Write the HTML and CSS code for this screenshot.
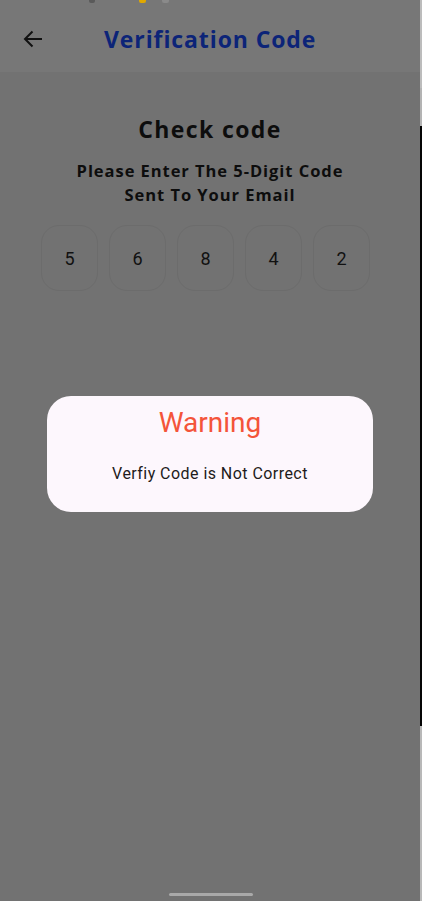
FILE: index.html
```html
<!DOCTYPE html>
<html lang="en">
<head>
<meta charset="utf-8">
<title>Verification Code</title>
<link rel="stylesheet" href="styles.css">
</head>
<body>
<div class="screen">
  <div class="main">
    <header class="appbar">
      <div class="status">
        <span class="st st-a"></span>
        <span class="st st-b"></span>
        <span class="st st-c"></span>
      </div>
      <button class="back" aria-label="Back">
        <svg width="20" height="18" viewBox="0 0 20 18"><path d="M19 9H2M9.5 1.5L2 9l7.5 7.5" fill="none" stroke="#111" stroke-width="2"/></svg>
      </button>
      <h1 class="title">Verification Code</h1>
    </header>
    <section class="content">
      <h2 class="heading">Check code</h2>
      <p class="sub">Please Enter The 5-Digit Code<br>Sent To Your Email</p>
      <div class="otp">
        <div class="box">5</div>
        <div class="box">6</div>
        <div class="box">8</div>
        <div class="box">4</div>
        <div class="box">2</div>
      </div>
    </section>
    <div class="home"></div>
  </div>
  <div class="edge">
    <div class="edge-top"></div>
    <div class="edge-dark"></div>
    <div class="edge-bottom"></div>
  </div>
  <div class="dialog">
    <div class="d-title">Warning</div>
    <div class="d-msg">Verfiy Code is Not Correct</div>
  </div>
</div>
</body>
</html>
```
FILE: styles.css
```css
* { box-sizing: border-box; }
html, body { margin: 0; padding: 0; }
body { background: #727272; width: 422px; height: 901px; overflow: hidden; }
.screen {
  position: relative;
  display: grid;
  grid-template-columns: 420px 2px;
  height: 901px;
}
.main {
  display: flex;
  flex-direction: column;
  height: 901px;
  background: #727272;
}
.appbar {
  position: relative;
  height: 72px;
  background: #777777;
  display: flex;
  align-items: center;
  padding: 6px 0 0 23px;
}
.status { position: absolute; top: 0; left: 0; right: 0; height: 4px; }
.st { position: absolute; top: 0; height: 3px; border-radius: 0 0 2px 2px; }
.st-a { left: 89px; width: 6px; background: #5a5a5a; }
.st-b { left: 139px; width: 7px; background: #e0a800; }
.st-c { left: 162px; width: 7px; background: #8a8a8a; }
.back {
  border: 0; background: none; padding: 0; margin: 0 0 0 0;
  width: 20px; height: 18px; display: flex;
}
.title {
  margin: 0 0 0 61px;
  font-family: "Open Sans", sans-serif;
  font-weight: 700;
  font-size: 23px;
  letter-spacing: 0.9px;
  color: #0c2478;
}
.content {
  flex: 1;
  display: flex;
  flex-direction: column;
  align-items: center;
  padding-top: 42px;
}
.heading {
  margin: 0;
  font-family: "Open Sans", sans-serif;
  font-weight: 700;
  font-size: 23px;
  line-height: 30px;
  letter-spacing: 1.4px;
  color: #0d0d0d;
}
.sub {
  margin: 15px 0 0;
  text-align: center;
  font-family: "Open Sans", sans-serif;
  font-weight: 700;
  font-size: 16.5px;
  line-height: 24px;
  letter-spacing: 0.95px;
  color: #0d0d0d;
}
.otp {
  margin: 18px 9px 0 0;
  display: flex;
  gap: 11px;
}
.box {
  width: 57px;
  height: 66px;
  border: 1px solid #6c6c6c;
  border-radius: 18px;
  display: flex;
  align-items: center;
  justify-content: center;
  font-family: Roboto, sans-serif;
  font-size: 18px;
  color: #111111;
}
.home {
  align-self: center;
  width: 84px;
  height: 3px;
  border-radius: 2px;
  background: #a9a9a9;
  margin: 0 0 5px 2px;
}
.edge { display: flex; flex-direction: column; }
.edge-top { height: 126px; background: #b3b3b3; box-shadow: inset 0 88px 0 #bcbcbc; }
.edge-dark { height: 600px; background: #050505; }
.edge-bottom { flex: 1; background: #b8b8b8; }
.dialog {
  position: absolute;
  left: 47px;
  top: 396px;
  width: 326px;
  height: 116px;
  background: #fdf7fd;
  border-radius: 24px;
  display: flex;
  flex-direction: column;
  align-items: center;
  padding-top: 9px;
}
.d-title {
  font-family: Roboto, sans-serif;
  font-size: 28px;
  line-height: 36px;
  color: #f4543a;
}
.d-msg {
  margin-top: 21px;
  font-family: Roboto, sans-serif;
  font-size: 16px;
  line-height: 24px;
  letter-spacing: 0.45px;
  color: #1d1b20;
}
```
